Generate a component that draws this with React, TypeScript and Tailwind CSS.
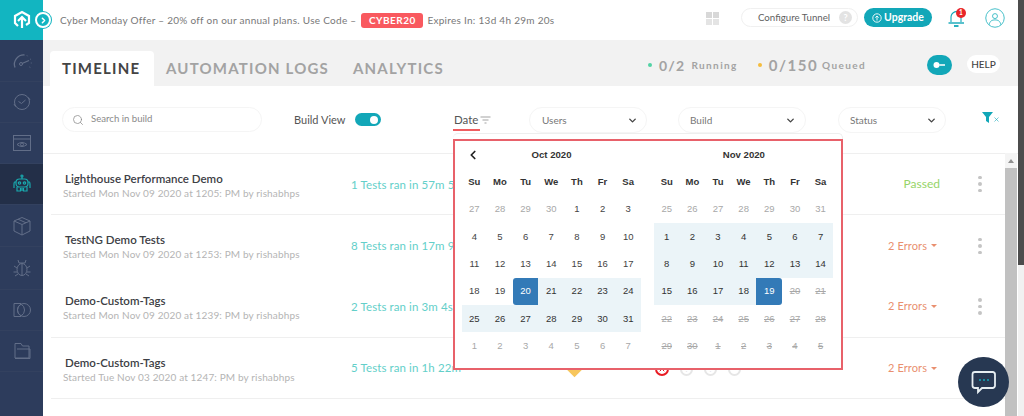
import React from "react";
import { ChevronLeft, ChevronDown, Search, ChevronRight, X } from "lucide-react";

const oct = [
  [27, 28, 29, 30, 1, 2, 3],
  [4, 5, 6, 7, 8, 9, 10],
  [11, 12, 13, 14, 15, 16, 17],
  [18, 19, 20, 21, 22, 23, 24],
  [25, 26, 27, 28, 29, 30, 31],
  [1, 2, 3, 4, 5, 6, 7],
];
const nov = [
  [25, 26, 27, 28, 29, 30, 31],
  [1, 2, 3, 4, 5, 6, 7],
  [8, 9, 10, 11, 12, 13, 14],
  [15, 16, 17, 18, 19, 20, 21],
  [22, 23, 24, 25, 26, 27, 28],
  [29, 30, 1, 2, 3, 4, 5],
];
const dow = ["Su", "Mo", "Tu", "We", "Th", "Fr", "Sa"];

function cellClass(month: "oct" | "nov", r: number, c: number) {
  const base = "h-[27.3px] flex items-center justify-center text-[9.5px] ";
  if (month === "oct") {
    if (r === 0 && c < 4) return base + "text-[#a8a8a8]";
    if (r === 5) return base + "text-[#a8a8a8]";
    if (r === 3 && c === 2) return base + "bg-[#337ab7] text-white rounded-l-[3px]";
    if ((r === 3 && c > 2) || r === 4) return base + "bg-[#ebf4f8] text-[#333]";
    return base + "text-[#444]";
  }
  if (r === 0) return base + "text-[#a8a8a8]";
  if (r === 3 && c === 4) return base + "bg-[#337ab7] text-white rounded-r-[3px]";
  if (r === 1 || r === 2 || (r === 3 && c < 4)) return base + "bg-[#ebf4f8] text-[#333]";
  return base + "text-[#a8a8a8] line-through";
}

function Month({ title, rows, id, arrow }: { title: string; rows: number[][]; id: "oct" | "nov"; arrow?: boolean }) {
  return (
    <div className="w-[180px]">
      <div className="h-[27.6px] flex items-center justify-center relative text-[9.6px] font-bold text-[#333]">
        {arrow && <ChevronLeft className="absolute left-[4px] top-[7px] w-[14px] h-[14px] text-[#222]" strokeWidth={3} />}
        {title}
      </div>
      <div className="grid grid-cols-7 w-[179.5px]">
        {dow.map((d) => (
          <div key={d} className="h-[27.3px] flex items-center justify-center text-[9.5px] font-bold text-[#333]">{d}</div>
        ))}
        {rows.map((row, r) =>
          row.map((n, c) => (
            <div key={`${r}-${c}`} className={cellClass(id, r, c)}>{n}</div>
          ))
        )}
      </div>
    </div>
  );
}

function Row({ title, sub, ran, status, passed, last, noLine, children }: { title: string; sub: string; ran: string; status: string; passed?: boolean; last?: boolean; noLine?: boolean; children?: React.ReactNode }) {
  return (
    <div className={`h-[61.3px] flex items-center ${noLine ? "" : "border-b border-[#efefef]"}`}>
      <div className="w-[300px] pl-[12px] pt-[2px] shrink-0">
        <div className="text-[11.5px] leading-[15px] text-[#3d4045] pl-[2px]" style={{ fontWeight: 600 }}>{title}</div>
        <div className="text-[10px] leading-[14px] text-[#b4b4b4] tracking-[0.14px]">{sub}</div>
      </div>
      <div className="w-[214px] shrink-0 text-[11.5px] text-[#63cfc9] tracking-[0.1px] whitespace-nowrap">{ran}</div>
      {children}
      <div className="flex-1" />
      <div className={`whitespace-nowrap flex items-center gap-[4px] ${passed ? "text-[12px] text-[#96d468]" : "text-[11px] tracking-[0.1px] text-[#e98f6f] mr-[3px]"}`}>
        {status}
        {!passed && <span className="w-0 h-0 border-l-[3px] border-r-[3px] border-t-[3px] border-l-transparent border-r-transparent border-t-[#e98f6f]" />}
      </div>
      <div className="w-[66px] pl-[38px] flex flex-col gap-[3px]">
        {!last && [0, 1, 2].map((i) => <span key={i} className="w-[3.5px] h-[3.5px] rounded-full bg-[#c4c4c4]" />)}
      </div>
    </div>
  );
}

function NavIcon({ active, children, h }: { active?: boolean; children: React.ReactNode; h: number }) {
  return (
    <div className={`flex items-center justify-center border-b border-[#33415f] ${active ? "bg-[#232f48]" : ""}`} style={{ height: h }}>
      {children}
    </div>
  );
}

const nav = { width: 20, height: 20, viewBox: "0 0 20 20", fill: "none", stroke: "#626e88", strokeWidth: 1 };

function Tick({ children }: { children: React.ReactNode }) {
  return <span className="w-[13px] h-[13px] rounded-full border-2 border-[#e6e6e6] flex items-center justify-center text-[7px] text-[#ddd]">{children}</span>;
}

export default function App() {
  return (
    <div className="w-[1024px] h-[416px] overflow-hidden flex bg-white relative" style={{ fontFamily: "Lato, 'Liberation Sans', sans-serif" }}>
      {/* sidebar */}
      <aside className="w-[43px] shrink-0 bg-[#2d3c5c] flex flex-col">
        <div className="h-[40px] bg-[#12b5c1] flex items-center justify-center">
          <svg width="18" height="20" viewBox="0 0 18 20" fill="none" stroke="#ffffff" strokeWidth="2.2">
            <path d="M5 16 L2 13 V6 L9 2 L16 6 V13 L13 15" />
            <path d="M9 18 V8 M5 11 L9 7 L13 11" />
          </svg>
        </div>
        <NavIcon h={42}>
          <svg {...nav} width="20" height="18" viewBox="0 0 20 18">
            <path d="M3 15.5 C0.5 9 6 2.5 12.5 3" strokeWidth="1.3" />
            <path d="M10 11.5 L17 8.5" strokeWidth="1.3" />
            <circle cx="9" cy="12" r="1.5" />
            <path d="M15 3.5 L15.5 4.2 M18 7 L18.7 7.3 M18.8 11 L19.6 11 M17.5 15 L18.3 15.5" />
          </svg>
        </NavIcon>
        <NavIcon h={41}>
          <svg {...nav}><circle cx="10" cy="10" r="7.5" /><path d="M6.5 9.5 L9.5 11.5 L13.5 8" /><path d="M2 12 L3.5 14.5 M18 8 L16.5 5.5" /></svg>
        </NavIcon>
        <NavIcon h={41}>
          <svg {...nav} width="18" height="16" viewBox="0 0 18 16"><rect x="0.5" y="0.5" width="17" height="15" /><path d="M0.5 4 H17.5" /><path d="M4 9.5 Q9 5.5 14 9.5 Q9 13.5 4 9.5 Z" /><circle cx="9" cy="9.5" r="1.5" /></svg>
        </NavIcon>
        <NavIcon h={41} active>
          <svg width="20" height="20" viewBox="0 0 20 20" fill="none" stroke="#19a9ae" strokeWidth="1.2"><circle cx="10" cy="2" r="1" /><path d="M10 3 V5" /><rect x="4" y="5" width="12" height="8" rx="3.5" /><circle cx="7.5" cy="9" r="1.2" /><circle cx="12.5" cy="9" r="1.2" /><path d="M4 8 H2.5 Q2 8 2 11 V14 M16 8 H17.5 Q18 8 18 11 V14" /><path d="M5 13 V17 H8.5 V14 M15 13 V17 H11.5 V14 M10 14 V17" /></svg>
        </NavIcon>
        <NavIcon h={42}>
          <svg {...nav}><path d="M2 5 L10 1.5 L18 5 V15 L10 19 L2 15 Z" /><path d="M2 5 L10 8.5 L18 5 M10 8.5 V19 M6 3.2 L14 6.8" /></svg>
        </NavIcon>
        <NavIcon h={43}>
          <svg {...nav}><ellipse cx="10" cy="11.5" rx="5" ry="6" /><path d="M10 6 V17.5 M7 5 L6 2 M13 5 L14 2 M7 5 H13 M5 10 L2 8 M15 10 L18 8 M5 14 H1.5 M15 14 H18.5 M6 16 L3 18 M14 16 L17 18" /></svg>
        </NavIcon>
        <NavIcon h={41}>
          <svg {...nav} height="14" viewBox="0 0 20 14"><path d="M9 0.5 H2 V13.5 H9" /><circle cx="12" cy="7" r="6.5" /><path d="M9 1.2 A6.5 6.5 0 0 0 9 12.8" /><path d="M9 1.2 A6.5 6.5 0 0 1 9 12.8" /></svg>
        </NavIcon>
        <NavIcon h={41}>
          <svg {...nav} height="18" viewBox="0 0 20 18"><path d="M3 16 V1.5 H9 L10.5 4 H17 V16 Z" /><path d="M5 7 H18 V16.5 H3" /></svg>
        </NavIcon>
        <div className="flex-1" />
      </aside>

      {/* main */}
      <main className="flex-1 flex flex-col min-w-0">
        {/* top banner */}
        <header className="h-[40px] bg-white flex items-center relative shrink-0 text-[#787878]">
          <span className="absolute left-[-8px] top-[12px] w-[16px] h-[16px] rounded-full bg-[#12b5c1] border-[2px] border-white flex items-center justify-center" style={{ boxShadow: "0 0 0 1px #12b5c1" }}>
            <ChevronRight className="w-[9px] h-[9px] text-white" strokeWidth={4} />
          </span>
          <span className="ml-[17px] text-[10px] tracking-[0.28px] whitespace-nowrap">Cyber Monday Offer – 20% off on our annual plans. Use Code –</span>
          <span className="ml-[5px] h-[15px] w-[62px] rounded-[3px] bg-[#f9595f] text-white text-[10px] font-bold tracking-[0.5px] flex items-center justify-center">CYBER20</span>
          <span className="ml-[4px] text-[10px] tracking-[0.28px] whitespace-nowrap">Expires In: 13d 4h 29m 20s</span>
          <div className="absolute left-[663px] top-[12px] grid grid-cols-2 gap-[1px]">
            {[0, 1, 2, 3].map((i) => <span key={i} className={`w-[6px] h-[6px] ${i < 2 ? "bg-[#d8d8d8]" : "bg-[#e4e4e4]"}`} />)}
          </div>
          <div className="absolute left-[698px] top-[8px] w-[117px] h-[19px] rounded-full border border-[#f0f0f0] flex items-center pl-[16px] text-[9.7px] text-[#5f5f5f] whitespace-nowrap">
            Configure Tunnel
            <span className="ml-[9px] w-[13px] h-[13px] rounded-full bg-[#e3e3e3] text-white text-[9px] font-bold flex items-center justify-center">?</span>
          </div>
          <div className="absolute left-[821px] top-[8px] w-[68px] h-[19px] rounded-full bg-[#12a7b8] text-white text-[10.5px] font-bold flex items-center justify-center gap-[2px]">
            <svg width="10" height="10" viewBox="0 0 10 10" fill="none" stroke="#fff" strokeWidth="0.9"><circle cx="5" cy="5" r="4.2" /><path d="M5 7.5 V3 M3.3 4.6 L5 3 L6.7 4.6" /></svg>
            Upgrade
          </div>
          <div className="absolute left-[904px] top-[8px]">
            <svg width="20" height="21" viewBox="0 0 20 21" fill="none" stroke="#12a7b8" strokeWidth="1.1"><path d="M4 14 V9 A6 6 0 0 1 14 5 V14" /><path d="M1.5 15 H17" strokeWidth="1.4" /><path d="M7 18 H11.5" strokeWidth="1.8" /></svg>
            <span className="absolute left-[9px] top-[0px] w-[10px] h-[10px] rounded-full bg-[#e8262a] text-white text-[6.5px] font-bold flex items-center justify-center">1</span>
          </div>
          <div className="absolute left-[942px] top-[8px]">
            <svg width="20" height="20" viewBox="0 0 21 21" fill="none" stroke="#28b5c0" strokeWidth="0.9"><circle cx="10.5" cy="10.5" r="9.7" /><circle cx="10.5" cy="8.5" r="2.6" /><path d="M4.5 17.5 C5 13.5 7.5 12.5 10.5 12.5 C13.5 12.5 16 13.5 16.5 17.5" /></svg>
          </div>
        </header>

        {/* tabs */}
        <div className="h-[46px] shrink-0 bg-[#f2f2f2] flex relative">
          <div className="ml-[7px] mt-[11px] w-[104px] h-[35px] bg-white rounded-t-[4px] flex items-center pl-[12px] text-[15px] font-bold tracking-[1.2px] text-[#444]">TIMELINE</div>
          <div className="ml-[12px] mt-[11px] h-[35px] flex items-center text-[15px] font-bold tracking-[1.2px] text-[#a3a3a3]">AUTOMATION LOGS</div>
          <div className="ml-[24px] mt-[11px] h-[35px] flex items-center text-[15px] font-bold tracking-[1.2px] text-[#a3a3a3]">ANALYTICS</div>
          <div className="absolute left-[605px] top-[14px] flex items-center text-[#a3a3a3]">
            <span className="w-[4px] h-[4px] rounded-full bg-[#52d3a4]" />
            <span className="ml-[7px] text-[14px] font-bold tracking-[1.2px]">0/2</span>
            <span className="ml-[6px] text-[10px] font-bold tracking-[1.4px]">Running</span>
            <span className="ml-[20px] w-[4px] h-[4px] rounded-full bg-[#f5bc3c]" />
            <span className="ml-[7px] text-[15px] font-bold tracking-[1.5px]">0/150</span>
            <span className="ml-[4px] text-[10px] font-bold tracking-[1.4px]">Queued</span>
          </div>
          <div className="absolute left-[884px] top-[15px] w-[25px] h-[20px] rounded-full bg-[#12a7b8] flex items-center justify-center">
            <svg width="13" height="8" viewBox="0 0 13 8"><circle cx="3.5" cy="4" r="3" fill="#fff" /><path d="M6 3 H12 V5 H6 Z" fill="#c5eaee" /></svg>
          </div>
          <div className="absolute left-[924px] top-[15px] w-[33px] h-[18px] rounded-full bg-white flex items-center justify-center text-[10px] text-[#444]" style={{ fontWeight: 500 }}>HELP</div>
        </div>

        {/* filters */}
        <div className="h-[67px] shrink-0 flex relative text-[#777]">
          <div className="absolute left-[19px] top-[21px] w-[200px] h-[25px] rounded-full border border-[#f5f5f5] flex items-center pl-[9px] text-[9.6px] text-[#8a8a8a]">
            <Search className="w-[12px] h-[12px] text-[#8a8a8a]" strokeWidth={1.5} />
            <span className="ml-[7px]">Search in build</span>
          </div>
          <span className="absolute left-[251px] top-[26px] text-[11px] leading-[16px] text-[#555]">Build View</span>
          <span className="absolute left-[312px] top-[27px] w-[26px] h-[13px] rounded-full bg-[#12a7b8] flex items-center justify-end pr-[3px]"><span className="w-[8px] h-[8px] rounded-full bg-white" /></span>
          <span className="absolute left-[411px] top-[26px] text-[11.5px] leading-[16px] text-[#555]">Date</span>
          <svg className="absolute left-[437px] top-[30px]" width="11" height="9" viewBox="0 0 11 9" stroke="#999" strokeWidth="0.9"><path d="M0.5 1 H10.5 M2.5 4 H8.5 M4.5 7 H6.5" /></svg>
          <span className="absolute left-[410px] top-[43px] w-[27px] h-[1.5px] bg-[#ef5d60]" />
          <div className="absolute left-[486px] top-[21px] w-[118px] h-[26px] rounded-full border border-[#f5f5f5] flex items-center pl-[12px] pr-[8px] justify-between text-[10px]">
            Users<ChevronDown className="w-[11px] h-[11px] text-[#444]" strokeWidth={3} />
          </div>
          <div className="absolute left-[635px] top-[21px] w-[128px] h-[26px] rounded-full border border-[#f5f5f5] flex items-center pl-[11px] pr-[9px] justify-between text-[10px]">
            Build<ChevronDown className="w-[11px] h-[11px] text-[#444]" strokeWidth={3} />
          </div>
          <div className="absolute left-[795px] top-[21px] w-[108px] h-[26px] rounded-full border border-[#f5f5f5] flex items-center pl-[11px] pr-[8px] justify-between text-[10px]">
            Status<ChevronDown className="w-[11px] h-[11px] text-[#444]" strokeWidth={3} />
          </div>
          <div className="absolute left-[939px] top-[26px] flex items-end">
            <svg width="11" height="11" viewBox="0 0 11 11"><path d="M0 0 H11 L7 5 V11 L4 9 V5 Z" fill="#12a7b8" /></svg>
            <X className="w-[7px] h-[7px] text-[#12a7b8]" strokeWidth={2} />
          </div>
        </div>

        {/* list */}
        <div className="flex-1 border-t border-[#efefef] pl-[8px] pr-[18px]">
          <Row title="Lighthouse Performance Demo" sub="Started Mon Nov 09 2020 at 1205: PM by rishabhps" ran="1 Tests ran in 57m 5s" status="Passed" passed />
          <Row title="TestNG Demo Tests" sub="Started Mon Nov 09 2020 at 1253: PM by rishabhps" ran="8 Tests ran in 17m 9s" status="2 Errors" noLine />
          <Row title="Demo-Custom-Tags" sub="Started Mon Nov 09 2020 at 1239: PM by rishabhps" ran="2 Tests ran in 3m 4s" status="2 Errors" />
          <Row title="Demo-Custom-Tags" sub="Started Tue Nov 03 2020 at 1247: PM by rishabhps" ran="5 Tests ran in 1h 22m" status="2 Errors" last>
            <div className="flex items-center pt-[2px]">
              <span className="ml-[4px] w-[11px] h-[11px] rotate-45 bg-[#f7c65c]" />
              <span className="ml-[75px] w-[14px] h-[14px] rounded-full border-2 border-[#e81c24] flex items-center justify-center">
                <X className="w-[8px] h-[8px] text-[#e81c24]" strokeWidth={3} />
              </span>
              <span className="ml-[11px]"><Tick>!</Tick></span>
              <span className="ml-[11px]"><Tick>!</Tick></span>
              <span className="ml-[11px]"><Tick>–</Tick></span>
            </div>
          </Row>
        </div>
      </main>

      {/* date picker popover */}
      <div className="absolute left-[453px] top-[133px] w-[390px] h-[236px] rounded-t-[5px] border-t border-r border-[#eeeeee] bg-white pt-[5px] z-10" style={{ fontFamily: "'Liberation Sans', Arial, sans-serif" }}>
        <div className="h-[231px] w-[390px] bg-white border-2 border-[#e8616a] pl-[6.5px] flex gap-[12.4px]">
          <Month title="Oct 2020" rows={oct} id="oct" arrow />
          <Month title="Nov 2020" rows={nov} id="nov" />
        </div>
      </div>

      {/* scrollbar */}
      <div className="absolute left-[1005px] top-[153px] w-[12px] h-[263px] bg-[#f4f4f4] flex flex-col items-center">
        <span className="mt-[6px] w-0 h-0 border-l-[3.5px] border-r-[3.5px] border-b-[4px] border-l-transparent border-r-transparent border-b-[#8f8f8f]" />
        <div className="mt-[5px] w-full flex-1 bg-[#c1c1c1]" />
      </div>
      <div className="absolute left-[1018px] top-0 w-[6px] h-[416px] bg-[#f1f1f1] flex flex-col">
        <div className="h-[265px] bg-[#4c4c4c]" />
      </div>

      {/* chat */}
      <div className="absolute left-[958px] top-[357px] w-[51px] h-[50px] rounded-full bg-[#273852] flex items-center justify-center z-20">
        <svg width="26" height="25" viewBox="0 0 26 25" fill="none"><path d="M4 2 H22 A2.5 2.5 0 0 1 24 4.5 V16 A2.5 2.5 0 0 1 22 18 H11 L7 22 V18 H4 A2.5 2.5 0 0 1 1.5 16 V4.5 A2.5 2.5 0 0 1 4 2 Z" stroke="#e6eef2" strokeWidth="1.8" /><circle cx="9" cy="10" r="1" fill="#12a7b8" /><circle cx="13" cy="10" r="1" fill="#12a7b8" /><circle cx="17" cy="10" r="1" fill="#12a7b8" /></svg>
      </div>
    </div>
  );
}
